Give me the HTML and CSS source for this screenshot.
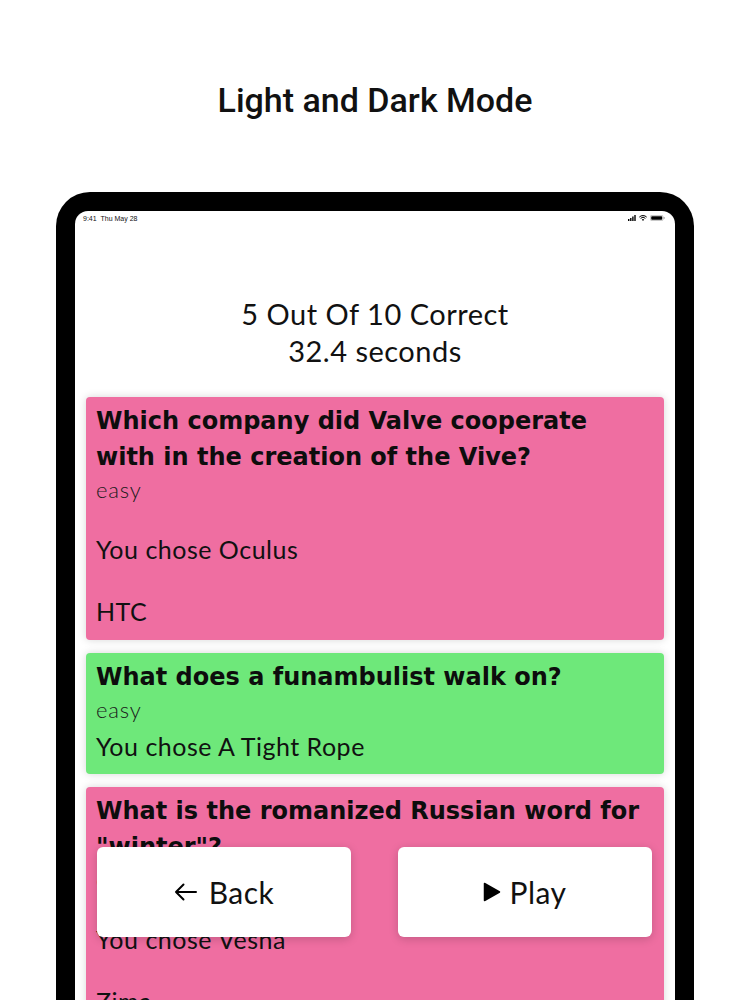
FILE: index.html
```html
<!DOCTYPE html>
<html lang="en">
<head>
<meta charset="utf-8">
<title>Light and Dark Mode</title>
<link rel="stylesheet" href="styles.css">
</head>
<body>
<h1 class="heading">Light and Dark Mode</h1>
<div class="device">
  <div class="screen">
    <div class="status">
      <span class="status-time">9:41&nbsp;&nbsp;Thu May 28</span>
      <span class="status-icons">
        <svg width="8" height="6" viewBox="0 0 8 6"><rect x="0" y="4" width="1.4" height="2" fill="#000"/><rect x="2.1" y="3" width="1.4" height="3" fill="#000"/><rect x="4.2" y="1.5" width="1.4" height="4.5" fill="#000"/><rect x="6.3" y="0" width="1.4" height="6" fill="#000"/></svg>
        <svg width="8" height="6" viewBox="0 0 8 6"><path d="M0.3 2.1 A5.2 5.2 0 0 1 7.7 2.1" stroke="#000" stroke-width="1" fill="none"/><path d="M1.6 3.4 A3.3 3.3 0 0 1 6.4 3.4" stroke="#000" stroke-width="1" fill="none"/><path d="M4 6 L2.8 4.6 A1.6 1.6 0 0 1 5.2 4.6 Z" fill="#000"/></svg>
        <svg width="15" height="6" viewBox="0 0 15 6"><rect x="0.4" y="0.4" width="12.6" height="5.2" rx="1.3" fill="none" stroke="#999" stroke-width="0.6"/><rect x="1.2" y="1.2" width="11" height="3.6" rx="0.7" fill="#000"/><rect x="13.6" y="2" width="1" height="2" rx="0.4" fill="#999"/></svg>
      </span>
    </div>
    <div class="score">
      <div>5 Out Of 10 Correct</div>
      <div>32.4 seconds</div>
    </div>
    <div class="cards">
      <div class="card card-wrong">
        <div class="q-title">Which company did Valve cooperate with in the creation of the Vive?</div>
        <div class="q-level">easy</div>
        <div class="q-line q-line-spaced">You chose Oculus</div>
        <div class="q-line q-line-spaced">HTC</div>
      </div>
      <div class="card card-right">
        <div class="q-title">What does a funambulist walk on?</div>
        <div class="q-level">easy</div>
        <div class="q-line q-line-tight">You chose A Tight Rope</div>
      </div>
      <div class="card card-wrong">
        <div class="q-title">What is the romanized Russian word for "winter"?</div>
        <div class="q-level">easy</div>
        <div class="q-line q-line-spaced">You chose Vesna</div>
        <div class="q-line q-line-spaced">Zima</div>
      </div>
    </div>
    <div class="actions">
      <button class="action"><svg class="btn-icon" width="23" height="18" viewBox="0 0 23 18"><path d="M22 9 H2 M9.5 1.5 L2 9 L9.5 16.5" stroke="#000" stroke-width="2" fill="none" stroke-linecap="round" stroke-linejoin="round"/></svg>Back</button>
      <button class="action action-play"><svg class="btn-icon" width="18" height="20" viewBox="0 0 18 20"><path d="M1.5 1.5 L16.5 10 L1.5 18.5 Z" fill="#000" stroke="#000" stroke-width="1.5" stroke-linejoin="round"/></svg>Play</button>
    </div>
  </div>
</div>
</body>
</html>
```
FILE: styles.css
```css
html, body {
  margin: 0;
  padding: 0;
}
body {
  width: 750px;
  height: 1000px;
  overflow: hidden;
  background: #ffffff;
  font-family: Lato, "Noto Sans", sans-serif;
  color: #111;
}
.heading {
  margin: 80px 0 0;
  height: 40px;
  line-height: 40px;
  text-align: center;
  font-family: Roboto, "Liberation Sans", sans-serif;
  font-weight: 500;
  font-size: 34px;
  color: #111;
}
.device {
  margin: 72px auto 0;
  width: 600px;
  height: 789px;
  padding: 19px 19px 0;
  background: #000;
  border-radius: 34px 34px 0 0;
}
.screen {
  position: relative;
  height: 789px;
  background: #fff;
  border-radius: 13px 13px 0 0;
  overflow: hidden;
}
.status {
  height: 14px;
  display: flex;
  justify-content: space-between;
  align-items: center;
  padding: 0 10px 0 8px;
  font-family: "Liberation Sans", sans-serif;
  font-size: 7px;
  color: #111;
}
.status-icons {
  display: flex;
  align-items: center;
  gap: 3px;
}
.score {
  margin-top: 70px;
  text-align: center;
  font-size: 29px;
  letter-spacing: 0.5px;
  line-height: 37px;
  font-weight: 400;
  color: #111;
}
.cards {
  margin-top: 28px;
  padding: 0 11px;
  display: flex;
  flex-direction: column;
  gap: 13px;
}
.card {
  border-radius: 4px;
  padding: 6px 14px 11px 10px;
  box-shadow: 0 0 9px rgba(0, 0, 0, 0.16);
}
.card-wrong {
  background: #ef6ea1;
}
.card-right {
  background: #6ee87a;
  padding-bottom: 10px;
}
.q-title {
  font-family: "DejaVu Sans", sans-serif;
  font-weight: 700;
  font-size: 24px;
  line-height: 36px;
  color: #0d0d0d;
}
.q-level {
  font-weight: 300;
  font-size: 22px;
  letter-spacing: 0.8px;
  line-height: 30px;
  color: #1a1a1a;
}
.q-line {
  font-size: 25px;
  letter-spacing: 0.5px;
  line-height: 36px;
  color: #111;
}
.q-line-spaced {
  margin-top: 26px;
}
.q-line-tight {
  margin-top: 3px;
}
.actions {
  position: absolute;
  top: 636px;
  left: 22px;
  right: 23px;
  height: 90px;
  display: flex;
  gap: 47px;
}
.action {
  flex: 1;
  border: none;
  background: #fff;
  border-radius: 6px;
  box-shadow: 0 2px 10px rgba(0, 0, 0, 0.18);
  font-family: Lato, "Noto Sans", sans-serif;
  font-size: 30px;
  letter-spacing: 0.5px;
  color: #111;
  display: flex;
  align-items: center;
  justify-content: center;
  gap: 12px;
  padding: 0;
}
.action-play {
  gap: 8px;
}
.btn-icon {
  display: block;
}
```
